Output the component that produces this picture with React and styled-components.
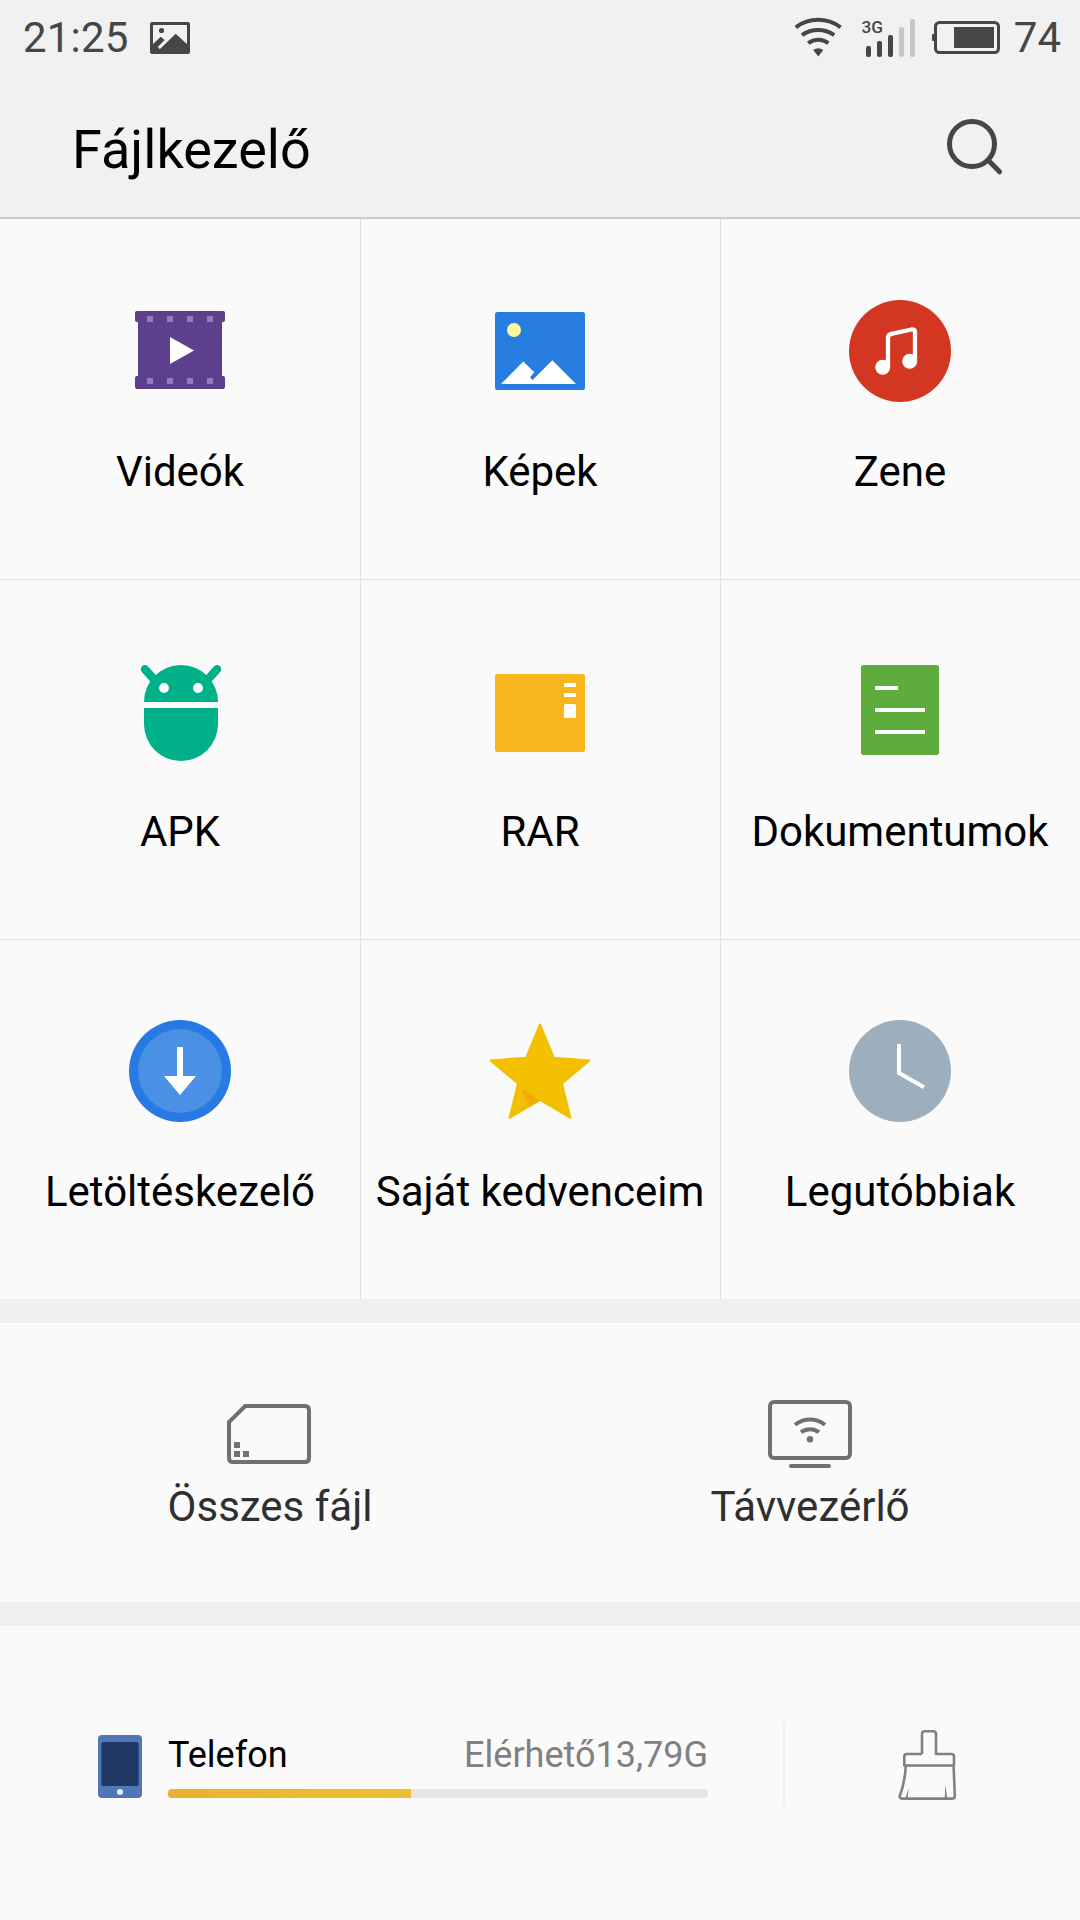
import React from "react"
import styled, { createGlobalStyle } from "styled-components"

const GlobalStyle = createGlobalStyle`
  * {
    box-sizing: border-box;
  }
  body {
    margin: 0;
    background: #fafafa;
    font-family: Roboto, sans-serif;
  }
  svg {
    display: block;
    flex: none;
  }
`

const Screen = styled.main`
  display: flex;
  flex-direction: column;
  width: 1080px;
  height: 1920px;
  overflow: hidden;
  background: #fafafa;
`

const Top = styled.header`
  height: 219px;
  background: #f1f1f1;
  border-bottom: 2px solid #cecece;
`

const StatusBar = styled.div`
  display: flex;
  justify-content: space-between;
  height: 75px;
  padding: 13px 19px 0 23px;
  color: #464646;
  font-size: 42px;
  line-height: 50px;
`

const StatusGroup = styled.div`
  display: flex;
  align-items: flex-start;
`

const Clock = styled.span`
  width: 127px;
  letter-spacing: 0.2px;
`

const StatusIcons = styled.div`
  display: flex;
  margin-right: 12px;
  svg {
    margin-top: 1px;
  }
`

const PictureSlot = styled.div`
  padding-top: 9px;
`

const TitleBar = styled.div`
  display: flex;
  justify-content: space-between;
  align-items: flex-start;
  padding: 43px 76px 0 72px;
  h1 {
    margin: 0;
    color: #000;
    font-size: 54px;
    font-weight: 400;
    line-height: 64px;
  }
`

const Grid = styled.section`
  display: grid;
  grid-template-columns: repeat(3, 360px);
  grid-template-rows: repeat(3, 360px);
  height: 1080px;
`

const Tile = styled.div`
  display: flex;
  flex-direction: column;
  align-items: center;
  padding-top: ${(p) => (p.$row > 0 ? 80 : 81)}px;
  border-left: ${(p) => (p.$col > 0 ? "1px solid #e0e0e0" : "none")};
  border-top: ${(p) => (p.$row > 0 ? "1px solid #e0e0e0" : "none")};
  padding-right: ${(p) => (p.$col > 0 ? 1 : 0)}px;
`

const Label = styled.span`
  margin-top: ${(p) => p.$gap}px;
  color: ${(p) => p.$color || "#000"};
  font-size: 42px;
  line-height: 50px;
  white-space: nowrap;
`

const Band = styled.div`
  height: 24px;
  background: #efefef;
`

const Shortcuts = styled.section`
  display: grid;
  grid-template-columns: 1fr 1fr;
  height: 279px;
  padding-top: 75px;
`

const Shortcut = styled.div`
  display: flex;
  flex-direction: column;
  align-items: center;
`

const Storage = styled.section`
  display: flex;
  align-items: flex-start;
  padding: 98px 0 0 98px;
  .phone {
    margin-top: 11px;
  }
  .brush {
    margin: 5px 0 0 113px;
  }
`

const StorageInfo = styled.div`
  width: 540px;
  margin: 10px 75px 0 26px;
`

const StorageText = styled.div`
  display: flex;
  justify-content: space-between;
  height: 55px;
  font-size: 36px;
  line-height: 42px;
  color: #000;
  .free {
    color: #808080;
  }
`

const Bar = styled.div`
  height: 9px;
  border-radius: 4px;
  background: #e6e6e6;
  overflow: hidden;
`

const Used = styled.div`
  height: 100%;
  background: linear-gradient(to right, #e9b12f, #ebc035);
`

const Divider = styled.div`
  width: 2px;
  height: 81px;
  background: #efefef;
`

const PictureIcon = () => (
  <svg width="40" height="32" viewBox="0 0 40 32" fill="#464646">
    <rect x="1.5" y="1.5" width="37" height="29" rx="0.5" fill="none" stroke="#464646" strokeWidth="3" />
    <circle cx="11.5" cy="8.5" r="2.6" />
    <path d="M2 23L10.7 14.7L14.7 18L8 24.7L9.7 27.3L25.7 11.7L38 23V30H2Z" />
  </svg>
)

// wifi, mobile signal and battery share one strip
const StatusSvg = () => (
  <svg width="210" height="50" viewBox="792 14 210 50" fill="none" stroke="#464646">
    <g strokeWidth="4">
      <path d="M795.8 27.3A37.4 37.4 0 0 1 840.6 27.3" />
      <path d="M802 35.2A28 28 0 0 1 834.2 35.2" />
      <path d="M808.2 43.2A16.5 16.5 0 0 1 828.4 43.2" />
    </g>
    <path d="M813.2 50Q818.2 46.4 823.3 50L818.3 56.6Z" fill="#464646" stroke="none" />
    <g fill="#464646" stroke="none">
      <text x="861.4" y="33" fontFamily="Roboto, sans-serif" fontSize="17.2" fontWeight="500">3G</text>
      <rect x="866" y="46" width="5" height="11" rx="2" />
      <rect x="877" y="41" width="5" height="16" rx="2" />
      <rect x="888" y="35" width="5" height="22" rx="2" />
      <rect x="899" y="27" width="5" height="30" rx="2" fill="#c6c6c6" />
      <rect x="910" y="19" width="5" height="38" rx="2" fill="#c6c6c6" />
      <rect x="932" y="34" width="3" height="7" rx="1" />
      <rect x="954" y="27" width="40" height="21" />
    </g>
    <rect x="935.5" y="22.5" width="63" height="30" rx="4" strokeWidth="3" />
  </svg>
)

const SearchIcon = () => (
  <svg width="58" height="58" viewBox="946 118 58 58" fill="none" stroke="#464646" strokeWidth="5" strokeLinecap="round">
    <circle cx="972" cy="144" r="22.5" />
    <path d="M988.5 160.5L999.6 171.8" />
  </svg>
)

const VideoIcon = () => (
  <svg width="102" height="102" fill="#5d3f8e">
    <rect x="6" y="11" width="90" height="11" rx="2" />
    <rect x="6" y="76" width="90" height="13" rx="2" />
    <rect x="9" y="13" width="84" height="74" />
    <g fill="#957bb9">
      {[18, 38, 58, 78].map((x) => (
        <React.Fragment key={x}>
          <rect x={x} y="16" width="6" height="6" />
          <rect x={x} y="78" width="6" height="6" />
        </React.Fragment>
      ))}
    </g>
    <path d="M41 37L65 50.5L41 64Z" fill="#fff" />
  </svg>
)

const ImageIcon = () => (
  <svg width="102" height="102">
    <rect x="6" y="12" width="90" height="78" rx="2.5" fill="#287ee0" />
    <circle cx="25" cy="30" r="7" fill="#fff799" />
    <path d="M12 84L34.3 61.5L45.3 72.3L41 77.3L43.5 80L63.3 60.3L87 84Z" fill="#fff" />
  </svg>
)

const MusicIcon = () => (
  <svg width="102" height="102">
    <circle cx="51" cy="51" r="51" fill="#d43721" />
    <path d="M39 67V38Q39 34.6 42.4 33.9L62.4 29.5Q66 29 66 32V61" fill="none" stroke="#fff" strokeWidth="4.3" />
    <circle cx="33.7" cy="67.3" r="7.5" fill="#fff" />
    <circle cx="60.7" cy="61.3" r="7.5" fill="#fff" />
  </svg>
)

const ApkIcon = () => (
  <svg width="102" height="102" fill="#00b088">
    <path d="M15 42A37 37 0 0 1 89 42Z" />
    <path d="M15 48H89V64A37 37 0 0 1 15 64Z" />
    <path d="M16 9.2L26 20.5M88 9.2L78 20.5" stroke="#00b088" strokeWidth="8.4" strokeLinecap="round" />
    <circle cx="35" cy="28" r="4.9" fill="#fff" />
    <circle cx="69" cy="28" r="4.9" fill="#fff" />
  </svg>
)

const RarIcon = () => (
  <svg width="102" height="102" fill="#fff">
    <rect x="6" y="14" width="90" height="78" rx="2.5" fill="#f7b51e" />
    <rect x="75" y="23" width="12" height="4" />
    <rect x="75" y="33" width="12" height="4" />
    <rect x="75" y="44" width="12" height="14" rx="1.5" />
  </svg>
)

const DocIcon = () => (
  <svg width="102" height="102" fill="#fff">
    <rect x="12" y="5" width="78" height="90" rx="2.5" fill="#5fac3e" />
    <rect x="26" y="26" width="23" height="4" />
    <rect x="26" y="48" width="50" height="4" />
    <rect x="26" y="70" width="50" height="4" />
  </svg>
)

const DownloadIcon = () => (
  <svg width="102" height="102">
    <circle cx="51" cy="51" r="51" fill="#2779e3" />
    <circle cx="51" cy="51" r="42" fill="#4a90e4" />
    <path d="M48 27H54V56H67L51 75L35 56H48Z" fill="#fff" />
  </svg>
)

const StarIcon = () => (
  <svg width="102" height="102">
    <path
      d="M51 4.5L64.8 37.7L100.5 40.4L73 63.6L81.5 98L51 79.8L20.5 98L29 63.6L1.5 40.4L37.2 37.7Z"
      fill="#f3c000"
      stroke="#f3c000"
      strokeWidth="2"
      strokeLinejoin="round"
    />
    <path d="M32.6 68.3L51 80.8L40 87.2Z" fill="#f2ab00" />
  </svg>
)

const RecentIcon = () => (
  <svg width="102" height="102">
    <circle cx="51" cy="51" r="51" fill="#9daebc" />
    <path d="M50 24V53L75 67.3" fill="none" stroke="#fff" strokeWidth="4" />
  </svg>
)

const CardIcon = () => (
  <svg width="90" height="72" viewBox="-2 -6 90 72" fill="#707070">
    <path d="M18.2 2H78Q82 2 82 6V54Q82 58 78 58H6Q2 58 2 54V18.2Z" fill="none" stroke="#707070" strokeWidth="4" />
    <rect x="7" y="38" width="6" height="6" />
    <rect x="7" y="47" width="6" height="6" />
    <rect x="16" y="47" width="6" height="6" />
  </svg>
)

const RemoteIcon = () => (
  <svg width="90" height="72" viewBox="-3 -2 90 72" fill="none" stroke="#707070" strokeWidth="4">
    <rect x="2" y="2" width="80" height="56" rx="4" />
    <path d="M27 24.8A24 24 0 0 1 57 24.8M33 32.2A15 15 0 0 1 51 32.2" />
    <circle cx="42" cy="39.3" r="3.2" fill="#707070" stroke="none" />
    <path d="M23 66H61" strokeLinecap="round" />
  </svg>
)

const PhoneIcon = () => (
  <svg className="phone" width="44" height="63">
    <rect width="44" height="63" rx="4" fill="#4f76b5" />
    <rect x="3.5" y="7" width="37" height="44" rx="1.5" fill="#213864" />
    <circle cx="22" cy="57" r="3" fill="#e3ecf8" />
  </svg>
)

const BrushIcon = () => (
  <svg className="brush" width="60" height="72" viewBox="898 1729 60 72" fill="none" stroke="#808080" strokeWidth="2.6" strokeLinejoin="round">
    <path d="M922 1754V1734Q922 1731.3 925 1731.3H933Q936 1731.3 936 1734V1754H951.5Q954 1754 954 1756.5V1765.5H904.3V1756.5Q904.3 1754 907 1754H922" />
    <path d="M905.8 1765.5Q905 1782 899.8 1796Q899.3 1798.6 902 1798.6H952Q954.8 1798.6 954.8 1796L953.6 1765.5" />
    <path d="M908.8 1788L905.4 1798H907.6ZM945.2 1784.5L944.8 1798H947.2Z" fill="#808080" stroke="none" />
  </svg>
)

const tiles = [
  { label: "Videók", icon: <VideoIcon /> },
  { label: "Képek", icon: <ImageIcon /> },
  { label: "Zene", icon: <MusicIcon /> },
  { label: "APK", icon: <ApkIcon /> },
  { label: "RAR", icon: <RarIcon /> },
  { label: "Dokumentumok", icon: <DocIcon /> },
  { label: "Letöltéskezelő", icon: <DownloadIcon /> },
  { label: "Saját kedvenceim", icon: <StarIcon /> },
  { label: "Legutóbbiak", icon: <RecentIcon /> },
]

function App() {
  const used = 45
  return (
    <Screen>
      <GlobalStyle />
      <Top>
        <StatusBar>
          <StatusGroup>
            <Clock>21:25</Clock>
            <PictureSlot>
              <PictureIcon />
            </PictureSlot>
          </StatusGroup>
          <StatusGroup>
            <StatusIcons>
              <StatusSvg />
            </StatusIcons>
            <span>74</span>
          </StatusGroup>
        </StatusBar>
        <TitleBar>
          <h1>Fájlkezelő</h1>
          <SearchIcon />
        </TitleBar>
      </Top>
      <Grid>
        {tiles.map((t, i) => (
          <Tile key={t.label} $row={Math.floor(i / 3)} $col={i % 3}>
            {t.icon}
            <Label $gap={45}>{t.label}</Label>
          </Tile>
        ))}
      </Grid>
      <Band />
      <Shortcuts>
        <Shortcut>
          <CardIcon />
          <Label $gap={12} $color="#2f2f2f">Összes fájl</Label>
        </Shortcut>
        <Shortcut>
          <RemoteIcon />
          <Label $gap={12} $color="#2f2f2f">Távvezérlő</Label>
        </Shortcut>
      </Shortcuts>
      <Band />
      <Storage>
        <PhoneIcon />
        <StorageInfo>
          <StorageText>
            <span>Telefon</span>
            <span className="free">Elérhető13,79G</span>
          </StorageText>
          <Bar>
            <Used style={{ width: `${used}%` }} />
          </Bar>
        </StorageInfo>
        <Divider />
        <BrushIcon />
      </Storage>
    </Screen>
  )
}

export default App
